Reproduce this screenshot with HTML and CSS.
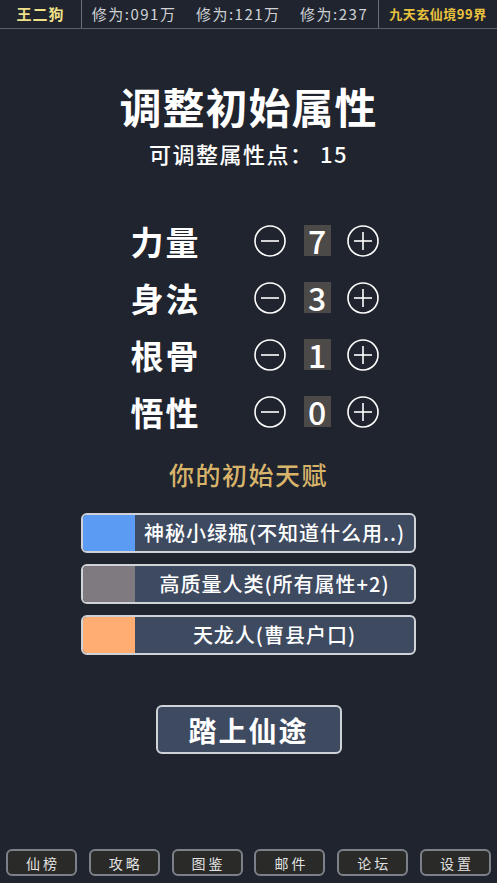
FILE: index.html
```html
<!DOCTYPE html>
<html>
<head>
    <meta charset="utf-8">
    <title>调整初始属性</title>
    <link rel="stylesheet" href="styles.css">
</head>
<body>
    <!-- 顶部状态栏 -->
    <div class="top-bar">
        <div class="player-name">王二狗</div>
        <div class="cultivation">
            <span>修为:091万</span>
            <span>修为:121万</span>
            <span>修为:237</span>
        </div>
        <div class="realm">九天玄仙境99界</div>
    </div>

    <div class="main">
        <h1 class="title">调整初始属性</h1>
        <div class="points">可调整属性点： 15</div>

        <div class="attrs">
            <div class="attr-row">
                <span class="attr-name">力量</span>
                <button class="step"><svg viewBox="0 0 32 32"><circle cx="16" cy="16" r="15" /><line x1="7" y1="16" x2="25" y2="16" /></svg></button>
                <span class="attr-value">7</span>
                <button class="step"><svg viewBox="0 0 32 32"><circle cx="16" cy="16" r="15" /><line x1="7" y1="16" x2="25" y2="16" /><line x1="16" y1="7" x2="16" y2="25" /></svg></button>
            </div>
            <div class="attr-row">
                <span class="attr-name">身法</span>
                <button class="step"><svg viewBox="0 0 32 32"><circle cx="16" cy="16" r="15" /><line x1="7" y1="16" x2="25" y2="16" /></svg></button>
                <span class="attr-value">3</span>
                <button class="step"><svg viewBox="0 0 32 32"><circle cx="16" cy="16" r="15" /><line x1="7" y1="16" x2="25" y2="16" /><line x1="16" y1="7" x2="16" y2="25" /></svg></button>
            </div>
            <div class="attr-row">
                <span class="attr-name">根骨</span>
                <button class="step"><svg viewBox="0 0 32 32"><circle cx="16" cy="16" r="15" /><line x1="7" y1="16" x2="25" y2="16" /></svg></button>
                <span class="attr-value">1</span>
                <button class="step"><svg viewBox="0 0 32 32"><circle cx="16" cy="16" r="15" /><line x1="7" y1="16" x2="25" y2="16" /><line x1="16" y1="7" x2="16" y2="25" /></svg></button>
            </div>
            <div class="attr-row">
                <span class="attr-name">悟性</span>
                <button class="step"><svg viewBox="0 0 32 32"><circle cx="16" cy="16" r="15" /><line x1="7" y1="16" x2="25" y2="16" /></svg></button>
                <span class="attr-value">0</span>
                <button class="step"><svg viewBox="0 0 32 32"><circle cx="16" cy="16" r="15" /><line x1="7" y1="16" x2="25" y2="16" /><line x1="16" y1="7" x2="16" y2="25" /></svg></button>
            </div>
        </div>

        <h2 class="talent-title">你的初始天赋</h2>
        <div class="talents">
            <div class="talent"><span class="talent-color blue"></span><span class="talent-text">神秘小绿瓶(不知道什么用..)</span></div>
            <div class="talent"><span class="talent-color gray"></span><span class="talent-text">高质量人类(所有属性+2)</span></div>
            <div class="talent"><span class="talent-color orange"></span><span class="talent-text">天龙人(曹县户口)</span></div>
        </div>

        <button class="start">踏上仙途</button>
    </div>

    <!-- 底部导航 -->
    <div class="bottom-nav">
        <button class="nav-btn">仙榜</button>
        <button class="nav-btn">攻略</button>
        <button class="nav-btn">图鉴</button>
        <button class="nav-btn">邮件</button>
        <button class="nav-btn">论坛</button>
        <button class="nav-btn">设置</button>
    </div>
</body>
</html>
```

FILE: styles.css
```css
html, body {
    height: 100%;
    margin: 0;
}

body {
    display: flex;
    flex-direction: column;
    background: #1f242e;
    color: #fff;
    font-family: "Noto Sans CJK SC", "Noto Sans", sans-serif;
}

button {
    font-family: inherit;
    cursor: pointer;
}

/* top bar */
.top-bar {
    display: flex;
    height: 28px;
    border-bottom: 1px solid #5a5e66;
    font-size: 15px;
    line-height: 28px;
}

.player-name {
    width: 81px;
    text-align: center;
    color: #efe08a;
    font-weight: bold;
    letter-spacing: 1px;
    border-right: 1px solid #6a6e76;
}

.cultivation {
    flex: 1;
    display: flex;
    justify-content: space-around;
    color: #cfd2d6;
    letter-spacing: 1.5px;
}

.realm {
    width: 118px;
    text-align: center;
    color: #e9c23e;
    font-weight: bold;
    font-size: 13px;
    letter-spacing: 0.5px;
    border-left: 1px solid #6a6e76;
}

/* main */
.main {
    display: flex;
    flex-direction: column;
    align-items: center;
}

.title {
    margin: 53px 0 0;
    font-size: 42px;
    line-height: 48px;
    letter-spacing: 1px;
    font-weight: bold;
}

.points {
    margin-top: 10px;
    font-size: 22px;
    line-height: 26px;
    font-weight: 500;
    letter-spacing: 1.5px;
}

.attrs {
    margin: 46px 0 0 12px;
    display: flex;
    flex-direction: column;
}

.attr-row {
    height: 57px;
    display: flex;
    align-items: center;
}

.attr-name {
    width: 70px;
    margin-right: 53px;
    font-size: 33px;
    font-weight: bold;
    letter-spacing: 2px;
}

.step {
    width: 32px;
    height: 32px;
    padding: 0;
    border: none;
    background: none;
}

.step svg {
    display: block;
    width: 32px;
    height: 32px;
    fill: none;
    stroke: #fff;
    stroke-width: 1.6;
}

.attr-value {
    width: 27px;
    height: 31px;
    margin: 0 16px 0 18px;
    background: #4c4a49;
    text-align: center;
    font-size: 32px;
    line-height: 31px;
    font-weight: 500;
}

.talent-title {
    margin: 18px 0 0;
    font-size: 25px;
    line-height: 33px;
    font-weight: 500;
    letter-spacing: 1.5px;
    color: #d8b46a;
}

.talents {
    margin-top: 22px;
    display: flex;
    flex-direction: column;
    gap: 11px;
}

.talent {
    width: 331px;
    height: 36px;
    display: flex;
    border: 2px solid #cfd2d6;
    border-radius: 6px;
    background: #3e4a5f;
    overflow: hidden;
}

.talent-color {
    width: 52px;
}

.talent-color.blue { background: #5b9bf4; }
.talent-color.gray { background: #7e7a7f; }
.talent-color.orange { background: #ffad72; }

.talent-text {
    flex: 1;
    text-align: center;
    font-size: 20px;
    line-height: 36px;
    font-weight: 500;
    letter-spacing: 1px;
}

.start {
    margin-top: 50px;
    width: 186px;
    height: 49px;
    border: 2px solid #cfd2d6;
    border-radius: 6px;
    background: #3e4a5f;
    color: #fff;
    font-size: 28px;
    font-weight: bold;
    letter-spacing: 2px;
}

/* bottom nav */
.bottom-nav {
    margin-top: auto;
    margin-bottom: 7px;
    padding: 0 6px;
    display: flex;
    justify-content: space-between;
}

.nav-btn {
    width: 71px;
    height: 27px;
    padding: 0;
    border: 2px solid #7c8089;
    border-radius: 6px;
    background: #2a2a28;
    color: #e2e2e2;
    font-size: 14px;
    letter-spacing: 3px;
    text-indent: 3px;
}
```
